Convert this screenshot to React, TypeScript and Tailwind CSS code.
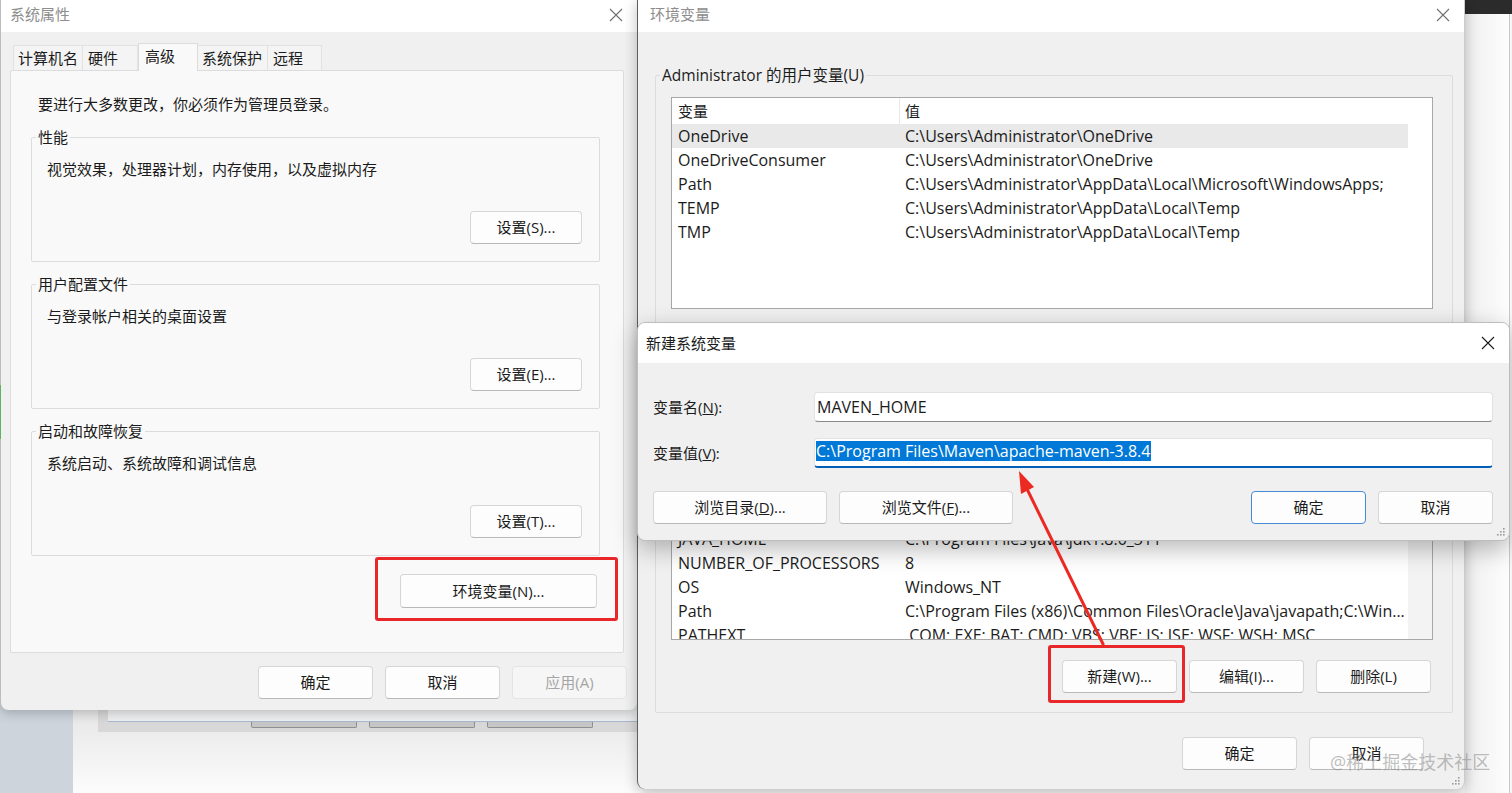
import React from 'react';
import clsx from 'clsx';

type Row = [string, string];

const userVars: Row[] = [
  ['OneDrive', 'C:\\Users\\Administrator\\OneDrive'],
  ['OneDriveConsumer', 'C:\\Users\\Administrator\\OneDrive'],
  ['Path', 'C:\\Users\\Administrator\\AppData\\Local\\Microsoft\\WindowsApps;'],
  ['TEMP', 'C:\\Users\\Administrator\\AppData\\Local\\Temp'],
  ['TMP', 'C:\\Users\\Administrator\\AppData\\Local\\Temp'],
];

const sysVars: Row[] = [
  ['CLASSPATH', '.;%JAVA_HOME%\\lib\\dt.jar;%JAVA_HOME%\\lib\\tools.jar;'],
  ['ComSpec', 'C:\\Windows\\system32\\cmd.exe'],
  ['DriverData', 'C:\\Windows\\System32\\Drivers\\DriverData'],
  ['JAVA_HOME', 'C:\\Program Files\\Java\\jdk1.8.0_311'],
  ['NUMBER_OF_PROCESSORS', '8'],
  ['OS', 'Windows_NT'],
  ['Path', 'C:\\Program Files (x86)\\Common Files\\Oracle\\Java\\javapath;C:\\Win...'],
  ['PATHEXT', '.COM;.EXE;.BAT;.CMD;.VBS;.VBE;.JS;.JSE;.WSF;.WSH;.MSC'],
];

const CloseIcon = ({ className = '' }: { className?: string }) => (
  <svg width="14" height="14" viewBox="0 0 14 14" fill="none" className={className}>
    <path d="M1 1L13 13M13 1L1 13" stroke="currentColor" strokeWidth="1.1" />
  </svg>
);

// little dotted resize grip in the bottom-right corner
const Grip = ({ className = '' }: { className?: string }) => (
  <svg width="10" height="10" viewBox="0 0 10 10" className={className}>
    {[
      [8, 2],
      [5, 5],
      [8, 5],
      [2, 8],
      [5, 8],
      [8, 8],
    ].map(([x, y]) => (
      <rect key={`${x}-${y}`} x={x - 1} y={y - 1} width="1.6" height="1.6" fill="#9c9c9c" />
    ))}
  </svg>
);

const WinButton = ({
  children,
  className = '',
  primary = false,
  disabled = false,
}: {
  children: React.ReactNode;
  className?: string;
  primary?: boolean;
  disabled?: boolean;
}) => (
  <div
    className={clsx(
      'flex h-[33px] shrink-0 items-center justify-center rounded-[4px] border text-[15px] leading-none',
      disabled
        ? 'border-[#e4e4e4] bg-[#f6f6f6] text-[#a5a5a5]'
        : primary
          ? 'border-[#4a8ad3] bg-[#fdfdfd] text-[#1b1b1b]'
          : 'border-[#d6d6d6] border-b-[#b9b9b9] bg-[#fdfdfd] text-[#1b1b1b]',
      className,
    )}
  >
    {children}
  </div>
);

const SettingGroup = ({ title, desc, button }: { title: string; desc: string; button: string }) => (
  <fieldset className="rounded-[2px] border border-[#dcdcdc]">
    <legend className="ml-[4px] px-[2px] text-[15px] leading-[20px]">{title}</legend>
    <div className="pb-[17px] pl-[15px] pr-[17px] pt-[12px]">
      <p className="text-[15px] leading-[20px]">{desc}</p>
      <div className="mt-[32px] flex justify-end">
        <WinButton className="w-[112px]">{button}</WinButton>
      </div>
    </div>
  </fieldset>
);

const VarList = ({ rows, highlight, scrollbar = false }: { rows: Row[]; highlight?: number; scrollbar?: boolean }) => (
  <div className="flex h-[212px] w-[762px] overflow-hidden border border-[#a8a8a8] bg-white">
    <div className="w-[736px] shrink-0">
      <div className="flex h-[26px] items-center text-[15px]">
        <div className="flex h-full w-[228px] items-center border-r border-[#e8e8e8] pl-[6px]">变量</div>
        <div className="pl-[5px]">值</div>
      </div>
      {rows.map(([name, value], i) => (
        <div
          key={name}
          className={clsx(
            'flex h-[24px] items-center whitespace-nowrap text-[16px]',
            i === highlight && 'bg-[#e9e9e9]',
          )}
        >
          <div className="w-[228px] shrink-0 overflow-hidden pl-[6px]">{name}</div>
          <div className="min-w-0 flex-1 overflow-hidden pl-[5px]">{value}</div>
        </div>
      ))}
    </div>
    <div className={clsx('flex-1', scrollbar ? 'bg-[#f3f3f3]' : 'bg-white')} />
  </div>
);

export default function App() {
  return (
    <div className="relative h-[793px] w-[1512px] overflow-hidden bg-[#f6f6f6] font-['Open_Sans','Noto_Sans_CJK_SC',sans-serif] text-[#1b1b1b]">
      {/* desktop behind the windows */}
      <div className="absolute left-0 top-[700px] h-[93px] w-[73px] bg-[#cdd4dc]" />
      <div className="absolute left-[73px] top-[700px] h-[93px] w-[570px] bg-gradient-to-b from-[#e4e4e4] to-[#fcfcfc]" />
      <div className="absolute left-[98px] top-[700px] h-[32px] w-[545px] bg-[#d8d8d8]">
        <div className="ml-[10px] h-[22px] border-b border-[#a9b8d0] bg-[#eef0f2]" />
        <div className="flex gap-[12px] pl-[153px]">
          <div className="h-[6px] w-[106px] rounded-b-[2px] border border-t-0 border-[#8e8e8e] bg-[#c6c6c6]" />
          <div className="h-[6px] w-[106px] rounded-b-[2px] border border-t-0 border-[#8e8e8e] bg-[#c6c6c6]" />
          <div className="h-[6px] w-[106px] rounded-b-[2px] border border-t-0 border-[#8e8e8e] bg-[#c6c6c6]" />
        </div>
      </div>
      <div className="absolute left-[1465px] top-0 h-[14px] w-[47px] bg-[#2b2b2b]" />
      <div className="absolute left-[1465px] top-[14px] h-[779px] w-[45px] border-r border-[#c9c9c9] bg-gradient-to-r from-[#efefef] to-[#fdfdfd]" />

      {/* 系统属性 */}
      <div className="absolute left-0 top-0 flex h-[710px] w-[637px] flex-col rounded-b-[8px] border-l border-[#bdbdbd] bg-[#f0f0f0] shadow-[0_3px_12px_rgba(0,0,0,0.22)]">
        <div className="flex h-[32px] shrink-0 items-center justify-between bg-white pb-[3px] pl-[9px] pr-[14px]">
          <span className="text-[15px] text-[#8d8d8d]">系统属性</span>
          <CloseIcon className="text-[#6f6f6f]" />
        </div>

        <div className="ml-[12px] mt-[11px] flex h-[27px] items-end text-[15px]">
          <div className="flex h-[25px] w-[70px] items-center border border-b-0 border-[#e2e2e2] bg-[#f4f4f4] pl-[4px]">计算机名</div>
          <div className="flex h-[25px] w-[55px] items-center border border-b-0 border-l-0 border-[#e2e2e2] bg-[#f4f4f4] pl-[5px]">硬件</div>
          <div className="relative z-10 -mb-px flex h-[28px] w-[60px] items-center border border-b-0 border-[#dcdcdc] bg-[#f9f9f9] pb-[2px] pl-[6px]">高级</div>
          <div className="flex h-[25px] w-[70px] items-center border border-b-0 border-l-0 border-[#e2e2e2] bg-[#f4f4f4] pl-[4px]">系统保护</div>
          <div className="flex h-[25px] w-[54px] items-center border border-b-0 border-l-0 border-[#e2e2e2] bg-[#f4f4f4] pl-[5px]">远程</div>
        </div>

        <div className="ml-[9px] flex h-[583px] w-[614px] flex-col rounded-[2px] border border-[#dcdcdc] bg-[#f9f9f9] pt-[23px]">
          <p className="pl-[27px] text-[15px] leading-[20px]">要进行大多数更改，你必须作为管理员登录。</p>
          <div className="ml-[20px] mt-[13px] flex w-[569px] flex-col gap-[12px]">
            <SettingGroup title="性能" desc="视觉效果，处理器计划，内存使用，以及虚拟内存" button="设置(S)..." />
            <SettingGroup title="用户配置文件" desc="与登录帐户相关的桌面设置" button="设置(E)..." />
            <SettingGroup title="启动和故障恢复" desc="系统启动、系统故障和调试信息" button="设置(T)..." />
          </div>
          <div className="mt-[18px] flex justify-end pr-[26px]">
            <div className="relative">
              <WinButton className="h-[34px] w-[197px]">环境变量(N)...</WinButton>
              <div className="absolute -bottom-[13px] -left-[25px] -right-[21px] -top-[17px] rounded-[3px] border-[3px] border-[#e9262a]" />
            </div>
          </div>
        </div>

        <div className="mt-[13px] flex justify-end gap-[12px] pr-[10px]">
          <WinButton className="w-[115px]">确定</WinButton>
          <WinButton className="w-[115px]">取消</WinButton>
          <WinButton className="w-[115px]" disabled>
            应用(A)
          </WinButton>
        </div>
      </div>
      <div className="absolute left-0 top-[385px] h-[54px] w-[1px] bg-[#5db55f]" />

      {/* 环境变量 */}
      <div className="absolute left-[637px] top-0 flex h-[789px] w-[828px] flex-col rounded-b-[8px] border-l border-r border-l-[#5e5e5e] border-r-[#cbcbcb] bg-[#f0f0f0] shadow-[0_3px_14px_rgba(0,0,0,0.25)]">
        <div className="flex h-[32px] shrink-0 items-center justify-between bg-white pb-[3px] pl-[12px] pr-[14px]">
          <span className="text-[15px] text-[#8d8d8d]">环境变量</span>
          <CloseIcon className="text-[#6f6f6f]" />
        </div>

        <div className="flex flex-col pl-[17px]">
          <fieldset className="mt-[33px] w-[798px] rounded-[2px] border border-[#dcdcdc]">
            <legend className="ml-[4px] px-[2px] text-[15.5px] leading-[20px]">Administrator 的用户变量(U)</legend>
            <div className="pb-[19px] pl-[15px] pt-[12px]">
              <VarList rows={userVars} highlight={0} />
              <div className="mt-[20px] flex w-[760px] justify-end gap-[12px]">
                <WinButton className="w-[115px]">新建(N)...</WinButton>
                <WinButton className="w-[115px]">编辑(E)...</WinButton>
                <WinButton className="w-[115px]">删除(D)</WinButton>
              </div>
            </div>
          </fieldset>

          <fieldset className="mt-[12px] w-[798px] rounded-[2px] border border-[#dcdcdc]">
            <legend className="ml-[4px] px-[2px] text-[15px] leading-[20px]">系统变量(S)</legend>
            <div className="pb-[19px] pl-[15px] pt-[14px]">
              <VarList rows={sysVars} scrollbar />
              <div className="mt-[20px] flex w-[760px] justify-end gap-[12px]">
                <div className="relative">
                  <WinButton className="w-[115px]">新建(W)...</WinButton>
                  <div className="absolute -bottom-[10px] -left-[14px] -right-[8px] -top-[15px] rounded-[3px] border-[3px] border-[#e9262a]" />
                </div>
                <WinButton className="w-[115px]">编辑(I)...</WinButton>
                <WinButton className="w-[115px]">删除(L)</WinButton>
              </div>
            </div>
          </fieldset>

          <div className="mt-[24px] flex justify-end gap-[12px] pr-[40px]">
            <WinButton className="w-[115px]">确定</WinButton>
            <WinButton className="w-[115px]">取消</WinButton>
          </div>
        </div>
        <Grip className="absolute bottom-[3px] right-[3px]" />
      </div>

      {/* 新建系统变量 */}
      <div className="absolute left-[637px] top-[322px] flex h-[219px] w-[873px] flex-col overflow-hidden rounded-[8px] border border-[#bdbdbd] bg-[#f0f0f0] shadow-[0_8px_24px_rgba(0,0,0,0.28)]">
        <div className="flex h-[40px] shrink-0 items-center justify-between bg-white pl-[8px] pr-[14px]">
          <span className="text-[15px]">新建系统变量</span>
          <CloseIcon className="text-[#1b1b1b]" />
        </div>
        <div className="flex flex-col pl-[15px] pr-[16px] pt-[29px] text-[15px]">
          <div className="flex h-[30px] items-center">
            <span className="w-[161px] shrink-0">
              变量名(<span className="underline">N</span>):
            </span>
            <div className="flex h-[30px] flex-1 items-center rounded-[4px] border border-[#e2e2e2] border-b-[#8a8a8a] bg-white pl-[2px] text-[16px]">
              MAVEN_HOME
            </div>
          </div>
          <div className="mt-[16px] flex h-[30px] items-center">
            <span className="w-[161px] shrink-0">
              变量值(<span className="underline">V</span>):
            </span>
            <div className="flex h-[30px] flex-1 items-center rounded-[4px] border border-b-2 border-[#e2e2e2] border-b-[#005fb8] bg-white pb-[3px] pl-[1px] text-[16px]">
              <span className="bg-[#0078d7] pr-[1px] leading-[20px] text-white">C:\Program Files\Maven\apache-maven-3.8.4</span>
            </div>
          </div>
          <div className="mt-[23px] flex items-center gap-[12px]">
            <WinButton className="w-[174px]">
              浏览目录(<span className="underline">D</span>)...
            </WinButton>
            <WinButton className="w-[174px]">
              浏览文件(<span className="underline">F</span>)...
            </WinButton>
            <div className="flex-1" />
            <WinButton className="w-[115px]" primary>
              确定
            </WinButton>
            <WinButton className="w-[115px]">取消</WinButton>
          </div>
        </div>
        <Grip className="absolute bottom-[3px] right-[3px]" />
      </div>

      {/* red annotation arrow */}
      <svg className="pointer-events-none absolute left-0 top-0" width="1512" height="793">
        <line x1="1103" y1="644" x2="1027" y2="489" stroke="#ec2a22" strokeWidth="3" strokeLinecap="round" />
        <polygon points="1019,471 1034,487 1021,494" fill="#ec2a22" />
      </svg>

      {/* watermark */}
      <div className="pointer-events-none absolute left-[1330px] top-[749px] whitespace-nowrap text-[18px] leading-[26px] text-[rgba(135,135,135,0.55)]">
        @稀土掘金技术社区
      </div>
    </div>
  );
}
